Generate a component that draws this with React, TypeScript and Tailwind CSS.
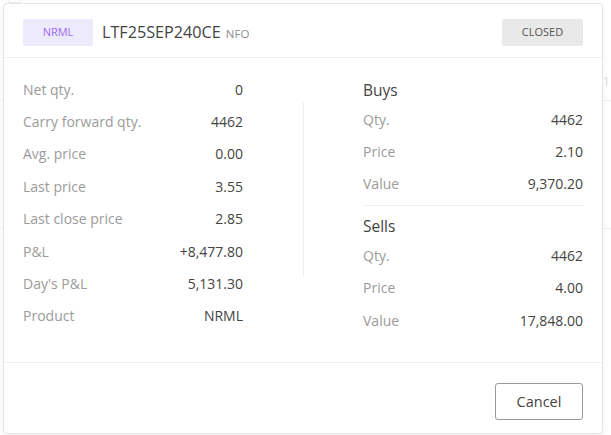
import React from "react";

const left: [string, string][] = [
  ["Net qty.", "0"],
  ["Carry forward qty.", "4462"],
  ["Avg. price", "0.00"],
  ["Last price", "3.55"],
  ["Last close price", "2.85"],
  ["P&L", "+8,477.80"],
  ["Day's P&L", "5,131.30"],
  ["Product", "NRML"],
];

const buys: [string, string][] = [
  ["Qty.", "4462"],
  ["Price", "2.10"],
  ["Value", "9,370.20"],
];
const sells: [string, string][] = [
  ["Qty.", "4462"],
  ["Price", "4.00"],
  ["Value", "17,848.00"],
];

function Row({ k, v }: { k: string; v: string }) {
  return (
    <div className="flex h-[32.4px] items-center justify-between text-[14px]">
      <span className="text-[#9b9b9b]">{k}</span>
      <span className="text-[#444444]">{v}</span>
    </div>
  );
}

export default function App() {
  return (
    <div
      className="relative h-[435px] w-[611px] overflow-hidden bg-white"
      style={{ fontFamily: '"Open Sans", sans-serif' }}
    >
      {/* faint page behind */}
      <div className="absolute left-[8px] top-[-6px] h-[9px] w-[13px] rounded-[2px] border border-[#eeeeee]" />
      <div className="absolute right-0 top-[100px] h-px w-[10px] bg-[#f0f0f0]" />
      <div className="absolute right-0 top-[228px] h-px w-[10px] bg-[#f0f0f0]" />
      <div className="absolute left-0 top-[100px] h-px w-[3px] bg-[#f0f0f0]" />
      <div className="absolute left-0 top-[228px] h-px w-[3px] bg-[#f0f0f0]" />
      <div className="absolute right-[1px] top-[72px] text-[13px] text-[#dddddd]">1</div>

      {/* modal */}
      <div className="absolute left-[3px] top-[3px] flex h-[431px] w-[600px] flex-col rounded-[4px] border border-[#e6e6e6] bg-white shadow-[0_2px_6px_rgba(0,0,0,0.06)]">
        {/* header */}
        <div className="flex h-[54px] shrink-0 items-start justify-between border-b border-[#eeeeee] px-[19px] pt-[15px]">
          <div className="flex items-center">
            <span className="flex h-[27px] w-[70px] items-center justify-center rounded-[2px] bg-[#eeeafd] text-[11px] text-[#9b6cf4]">
              NRML
            </span>
            <span className="ml-[9px] text-[16.2px] text-[#444444]">LTF25SEP240CE</span>
            <span className="ml-[5px] mt-[2px] text-[11.5px] text-[#8c8c8c]">NFO</span>
          </div>
          <span className="flex h-[27px] w-[81px] items-center justify-center rounded-[2px] bg-[#e9e9e9] text-[11px] text-[#555555]">
            CLOSED
          </span>
        </div>

        {/* body */}
        <div className="flex h-[305px] shrink-0 border-b border-[#eeeeee] px-[19px] pt-[15px]">
          <div className="w-[220px]">
            {left.map(([k, v]) => (
              <Row key={k} k={k} v={v} />
            ))}
          </div>
          <div className="flex w-[120px] justify-center pt-[29px]">
            <div className="h-[175px] w-px bg-[#eeeeee]" />
          </div>
          <div className="w-[220px]">
            <div className="mt-[6px] flex h-6 items-center text-[15.5px] text-[#444444]">Buys</div>
            <div>
              {buys.map(([k, v]) => (
                <Row key={k} k={k} v={v} />
              ))}
            </div>
            <div className="mt-[5px] h-px bg-[#eeeeee]" />
            <div className="mt-[8px] flex h-6 items-center text-[15.5px] text-[#444444]">Sells</div>
            <div className="mt-[1px]">
              {sells.map(([k, v]) => (
                <Row key={k} k={k} v={v} />
              ))}
            </div>
          </div>
        </div>

        {/* footer */}
        <div className="flex justify-end px-[19px] pt-[20px]">
          <button className="h-[37px] w-[88px] rounded-[3px] border border-[#9a9a9a] bg-white text-[14.5px] text-[#444444]">
            Cancel
          </button>
        </div>
      </div>
    </div>
  );
}
